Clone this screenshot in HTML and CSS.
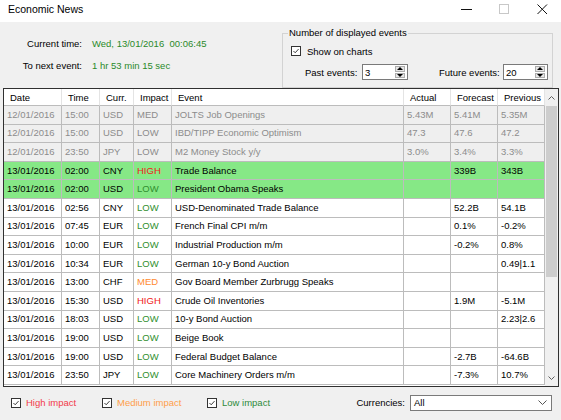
FILE: index.html
```html
<!DOCTYPE html>
<html>
<head>
<meta charset="utf-8">
<link rel="stylesheet" href="styles.css">
</head>
<body>
<div class="window">
  <div class="titlebar">
    <div class="title">Economic News</div>
    <div class="winbtn"><svg width="11" height="11" viewBox="0 0 11 11"><path d="M0 5.5H11" stroke="#111" stroke-width="1"/></svg></div>
    <div class="winbtn"><svg width="11" height="11" viewBox="0 0 11 11"><rect x="0.5" y="0.5" width="9" height="9" fill="none" stroke="#c8c8c8" stroke-width="1"/></svg></div>
    <div class="winbtn"><svg width="11" height="11" viewBox="0 0 11 11"><path d="M0.5 0.5L10 10M10 0.5L0.5 10" stroke="#111" stroke-width="1"/></svg></div>
  </div>

  <div class="top">
    <div class="clock">
      <div class="lbl">Current time:</div><div class="val">Wed, 13/01/2016&nbsp; 00:06:45</div>
      <div class="lbl">To next event:</div><div class="val">1 hr 53 min 15 sec</div>
    </div>
    <fieldset class="group">
      <legend>Number of displayed events</legend>
      <div class="chk-row">
        <span class="cb"><svg width="10" height="10" viewBox="0 0 10 10"><path d="M1.8 5L4 7.2L8.2 2.6" fill="none" stroke="#222" stroke-width="1.1"/></svg></span>
        <span>Show on charts</span>
      </div>
      <div class="spin-row">
        <span class="spin-lbl past">Past events:</span>
        <span class="spin past-in"><span class="spin-val">3</span><span class="spin-btns"><span class="sbtn"><svg width="6" height="3" viewBox="0 0 6 3"><path d="M0 3L3 0L6 3Z" fill="#000"/></svg></span><span class="sbtn"><svg width="6" height="3" viewBox="0 0 6 3"><path d="M0 0L3 3L6 0Z" fill="#000"/></svg></span></span></span>
        <span class="spin-lbl future">Future events:</span>
        <span class="spin future-in"><span class="spin-val">20</span><span class="spin-btns"><span class="sbtn"><svg width="6" height="3" viewBox="0 0 6 3"><path d="M0 3L3 0L6 3Z" fill="#000"/></svg></span><span class="sbtn"><svg width="6" height="3" viewBox="0 0 6 3"><path d="M0 0L3 3L6 0Z" fill="#000"/></svg></span></span></span>
      </div>
    </fieldset>
  </div>

  <div class="grid">
    <table class="events">
      <colgroup>
        <col class="c-date"><col class="c-time"><col class="c-cur"><col class="c-imp"><col class="c-ev"><col class="c-num"><col class="c-num"><col class="c-num">
      </colgroup>
      <thead>
        <tr><th>Date</th><th>Time</th><th>Curr.</th><th>Impact</th><th>Event</th><th>Actual</th><th>Forecast</th><th>Previous</th></tr>
      </thead>
      <tbody>
        <tr class="past"><td>12/01/2016</td><td>15:00</td><td>USD</td><td>MED</td><td>JOLTS Job Openings</td><td>5.43M</td><td>5.41M</td><td>5.35M</td></tr>
        <tr class="past"><td>12/01/2016</td><td>15:00</td><td>USD</td><td>LOW</td><td>IBD/TIPP Economic Optimism</td><td>47.3</td><td>47.6</td><td>47.2</td></tr>
        <tr class="past"><td>12/01/2016</td><td>23:50</td><td>JPY</td><td>LOW</td><td>M2 Money Stock y/y</td><td>3.0%</td><td>3.4%</td><td>3.3%</td></tr>
        <tr class="now"><td>13/01/2016</td><td>02:00</td><td>CNY</td><td class="high">HIGH</td><td>Trade Balance</td><td></td><td>339B</td><td>343B</td></tr>
        <tr class="now"><td>13/01/2016</td><td>02:00</td><td>USD</td><td class="low">LOW</td><td>President Obama Speaks</td><td></td><td></td><td></td></tr>
        <tr><td>13/01/2016</td><td>02:56</td><td>CNY</td><td class="low">LOW</td><td>USD-Denominated Trade Balance</td><td></td><td>52.2B</td><td>54.1B</td></tr>
        <tr><td>13/01/2016</td><td>07:45</td><td>EUR</td><td class="low">LOW</td><td>French Final CPI m/m</td><td></td><td>0.1%</td><td>-0.2%</td></tr>
        <tr><td>13/01/2016</td><td>10:00</td><td>EUR</td><td class="low">LOW</td><td>Industrial Production m/m</td><td></td><td>-0.2%</td><td>0.8%</td></tr>
        <tr><td>13/01/2016</td><td>10:34</td><td>EUR</td><td class="low">LOW</td><td>German 10-y Bond Auction</td><td></td><td></td><td>0.49|1.1</td></tr>
        <tr><td>13/01/2016</td><td>13:00</td><td>CHF</td><td class="med">MED</td><td>Gov Board Member Zurbrugg Speaks</td><td></td><td></td><td></td></tr>
        <tr><td>13/01/2016</td><td>15:30</td><td>USD</td><td class="high">HIGH</td><td>Crude Oil Inventories</td><td></td><td>1.9M</td><td>-5.1M</td></tr>
        <tr><td>13/01/2016</td><td>18:03</td><td>USD</td><td class="low">LOW</td><td>10-y Bond Auction</td><td></td><td></td><td>2.23|2.6</td></tr>
        <tr><td>13/01/2016</td><td>19:00</td><td>USD</td><td class="low">LOW</td><td>Beige Book</td><td></td><td></td><td></td></tr>
        <tr><td>13/01/2016</td><td>19:00</td><td>USD</td><td class="low">LOW</td><td>Federal Budget Balance</td><td></td><td>-2.7B</td><td>-64.6B</td></tr>
        <tr><td>13/01/2016</td><td>23:50</td><td>JPY</td><td class="low">LOW</td><td>Core Machinery Orders m/m</td><td></td><td>-7.3%</td><td>10.7%</td></tr>
      </tbody>
    </table>
    <div class="vscroll">
      <div class="sb-arrow"><svg width="7" height="4" viewBox="0 0 7 4"><path d="M0.5 3.5L3.5 0.5L6.5 3.5" fill="none" stroke="#606060" stroke-width="1"/></svg></div>
      <div class="sb-thumb"></div>
      <div class="sb-track"></div>
      <div class="sb-arrow"><svg width="7" height="4" viewBox="0 0 7 4"><path d="M0.5 0.5L3.5 3.5L6.5 0.5" fill="none" stroke="#606060" stroke-width="1"/></svg></div>
    </div>
  </div>

  <div class="bottom">
    <div class="imp imp-high"><span class="cb"><svg width="10" height="10" viewBox="0 0 10 10"><path d="M1.8 5L4 7.2L8.2 2.6" fill="none" stroke="#222" stroke-width="1.1"/></svg></span><span>High impact</span></div>
    <div class="imp imp-med"><span class="cb"><svg width="10" height="10" viewBox="0 0 10 10"><path d="M1.8 5L4 7.2L8.2 2.6" fill="none" stroke="#222" stroke-width="1.1"/></svg></span><span>Medium impact</span></div>
    <div class="imp imp-low"><span class="cb"><svg width="10" height="10" viewBox="0 0 10 10"><path d="M1.8 5L4 7.2L8.2 2.6" fill="none" stroke="#222" stroke-width="1.1"/></svg></span><span>Low impact</span></div>
    <div class="cur-lbl">Currencies:</div>
    <div class="combo"><span>All</span><svg width="9" height="5" viewBox="0 0 9 5"><path d="M0.5 0.5L4.5 4.5L8.5 0.5" fill="none" stroke="#555" stroke-width="1"/></svg></div>
  </div>
</div>
</body>
</html>
```

FILE: styles.css
```css
* { box-sizing: border-box; }

html, body {
  margin: 0;
  padding: 0;
}

body {
  width: 561px;
  height: 420px;
  overflow: hidden;
  background: #f0f0f0;
  font-family: "Liberation Sans", Arial, sans-serif;
  font-size: 9.5px;
  color: #000;
}

.window {
  width: 561px;
  height: 420px;
  display: flex;
  flex-direction: column;
}

/* title bar */
.titlebar {
  height: 22px;
  background: #fff;
  display: flex;
  align-items: center;
}
.title {
  flex: 1;
  padding-left: 8px;
  font-size: 10.5px;
  padding-bottom: 4px;
}
.winbtn {
  width: 38px;
  height: 22px;
  display: flex;
  align-items: center;
  justify-content: center;
  padding-bottom: 4px;
}

/* top area */
.top {
  height: 66px;
  display: flex;
}
.clock {
  width: 282px;
  padding-top: 10px;
  display: grid;
  grid-template-columns: 82px auto;
  grid-auto-rows: 22px;
  column-gap: 10px;
  align-items: center;
  align-content: start;
}
.clock .lbl { text-align: right; }
.clock .val { color: #2a8a2a; }

.group {
  margin: 5px 0 0 0;
  width: 271px;
  min-width: 0;
  border: 1px solid #d3d3d3;
  padding: 5px 0 5px 8px;
}
.group legend {
  margin-left: -3px;
  padding: 0 1px;
  line-height: 12px;
  font-size: 9.5px;
}
.chk-row {
  height: 14px;
  display: flex;
  align-items: center;
  gap: 6px;
}
.cb {
  width: 10px;
  height: 10px;
  border: 1px solid #333;
  background: #fff;
  display: inline-flex;
  align-items: center;
  justify-content: center;
  flex: none;
}
.cb svg { display: block; }

.spin-row {
  margin-top: 6px;
  margin-left: 14px;
  height: 16px;
  display: flex;
  align-items: center;
}
.spin-lbl.past { width: 57px; }
.spin-lbl.future { width: 64px; margin-left: 31px; }
.spin {
  height: 16px;
  background: #fff;
  border: 1px solid #7a7a7a;
  display: flex;
  align-items: center;
  padding-left: 2px;
}
.past-in { width: 46px; }
.future-in { width: 45px; }
.spin-val { flex: 1; }
.spin-btns {
  width: 10px;
  height: 12px;
  margin-right: 2px;
  display: flex;
  flex-direction: column;
  gap: 1px;
}
.sbtn {
  flex: 1;
  background: #e6e6e6;
  border: 1px solid #adadad;
  display: flex;
  align-items: center;
  justify-content: center;
}
.sbtn svg { display: block; }

/* grid */
.grid {
  margin-left: 3px;
  width: 556px;
  height: 299px;
  border: 1px solid #303030;
  background: #fff;
  display: flex;
  flex: none;
}
.events {
  width: 541px;
  table-layout: fixed;
  border-collapse: separate;
  border-spacing: 0;
  flex: none;
  align-self: flex-start;
}
.c-date { width: 58px; }
.c-time { width: 38px; }
.c-cur { width: 34px; }
.c-imp { width: 38px; }
.c-ev { width: 232px; }
.c-num { width: 47px; }

.events th {
  height: 17px;
  font-weight: normal;
  text-align: left;
  padding: 0 0 0 6px;
  background: #fff;
  border-right: 1px solid #e4e4e4;
  border-bottom: 1px solid #bcbcbc;
  white-space: nowrap;
  overflow: hidden;
}
.events tbody tr { height: 18.6px; }
.events td {
  padding: 0 0 0 3px;
  border-right: 1px solid #bcbcbc;
  border-bottom: 1px solid #bcbcbc;
  white-space: nowrap;
  overflow: hidden;
  line-height: 12px;
}
.events tr.past td {
  background: #efefef;
  color: #8c8c8c;
}
.events tr.now td { background: #86e886; }
.events td.high { color: #f01818; }
.events td.med { color: #ff8a30; }
.events td.low { color: #2f8f2f; }

.vscroll {
  flex: 1;
  display: flex;
  flex-direction: column;
  background: #f0f0f0;
}
.sb-arrow {
  height: 17px;
  display: flex;
  align-items: center;
  justify-content: center;
}
.sb-arrow svg { display: block; }
.sb-thumb {
  height: 171px;
  margin: 0 1px;
  background: #cdcdcd;
}
.sb-track { flex: 1; }

/* bottom bar */
.bottom {
  flex: 1;
  display: flex;
  align-items: center;
  padding: 0 9px 2px 11px;
}
.imp {
  display: flex;
  align-items: center;
  gap: 5px;
}
.imp-high { width: 91px; color: #f23a4a; }
.imp-med { width: 105px; color: #ff9e4a; }
.imp-low { flex: 1; color: #2e8a3a; }
.cur-lbl { margin-right: 5px; }
.combo {
  width: 142px;
  height: 16px;
  background: #fff;
  border: 1px solid #7a7a7a;
  display: flex;
  align-items: center;
  justify-content: space-between;
  padding: 0 4px 0 3px;
}
.combo svg { display: block; }
```
